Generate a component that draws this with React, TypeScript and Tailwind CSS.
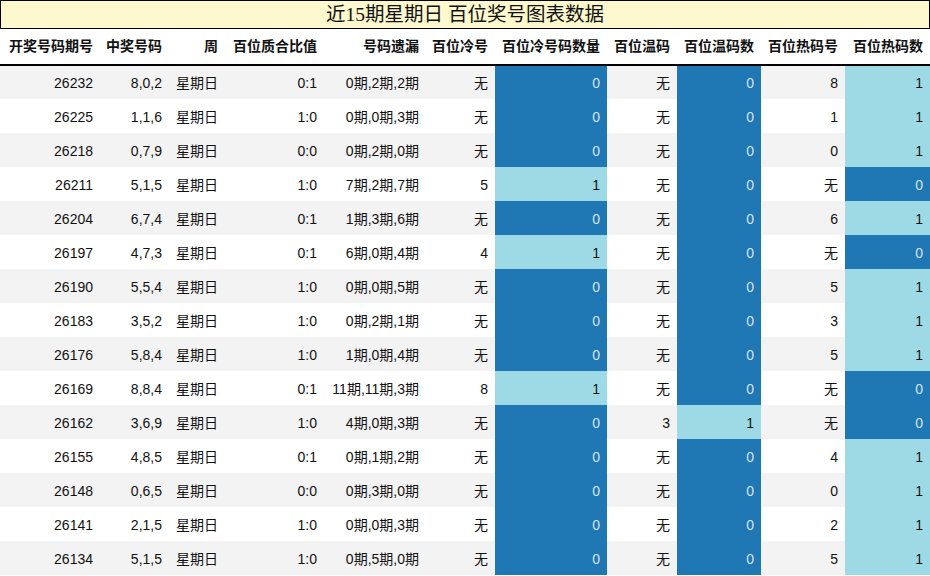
const ROWS: string[][] = [
  ["26232", "8,0,2", "星期日", "0:1", "0期,2期,2期", "无", "0", "无", "0", "8", "1"],
  ["26225", "1,1,6", "星期日", "1:0", "0期,0期,3期", "无", "0", "无", "0", "1", "1"],
  ["26218", "0,7,9", "星期日", "0:0", "0期,2期,0期", "无", "0", "无", "0", "0", "1"],
  ["26211", "5,1,5", "星期日", "1:0", "7期,2期,7期", "5", "1", "无", "0", "无", "0"],
  ["26204", "6,7,4", "星期日", "0:1", "1期,3期,6期", "无", "0", "无", "0", "6", "1"],
  ["26197", "4,7,3", "星期日", "0:1", "6期,0期,4期", "4", "1", "无", "0", "无", "0"],
  ["26190", "5,5,4", "星期日", "1:0", "0期,0期,5期", "无", "0", "无", "0", "5", "1"],
  ["26183", "3,5,2", "星期日", "1:0", "0期,2期,1期", "无", "0", "无", "0", "3", "1"],
  ["26176", "5,8,4", "星期日", "1:0", "1期,0期,4期", "无", "0", "无", "0", "5", "1"],
  ["26169", "8,8,4", "星期日", "0:1", "11期,11期,3期", "8", "1", "无", "0", "无", "0"],
  ["26162", "3,6,9", "星期日", "1:0", "4期,0期,3期", "无", "0", "3", "1", "无", "0"],
  ["26155", "4,8,5", "星期日", "0:1", "0期,1期,2期", "无", "0", "无", "0", "4", "1"],
  ["26148", "0,6,5", "星期日", "0:0", "0期,3期,0期", "无", "0", "无", "0", "0", "1"],
  ["26141", "2,1,5", "星期日", "1:0", "0期,0期,3期", "无", "0", "无", "0", "2", "1"],
  ["26134", "5,1,5", "星期日", "1:0", "0期,5期,0期", "无", "0", "无", "0", "5", "1"],
];

const HEADERS = [
  "开奖号码期号",
  "中奖号码",
  "周",
  "百位质合比值",
  "号码遗漏",
  "百位冷号",
  "百位冷号码数量",
  "百位温码",
  "百位温码数",
  "百位热码号",
  "百位热码数",
];

const WIDTHS = [100, 69, 56, 99, 102, 69, 112, 70, 84, 84, 85];

// columns that are shaded by their count value
const COUNT_COLS = [6, 8, 10];

function cellClass(ci: number, v: string, ri: number) {
  if (COUNT_COLS.includes(ci)) {
    return v === "0" ? "bg-[#1f77b4] text-[#d6e4f0]" : "bg-[#9edae5] text-[#111]";
  }
  return ri % 2 === 0 ? "bg-[#f3f3f3] text-[#111]" : "bg-white text-[#111]";
}

export default function App() {
  return (
    <div className="w-[930px] h-[576px] overflow-hidden bg-white font-['Liberation_Sans','Noto_Sans_CJK_SC',sans-serif]">
      <div className="h-[29px] border border-black bg-[#fdf8cd] flex items-center justify-center text-[19.5px] leading-none text-[#111] font-['Liberation_Serif','Noto_Sans_CJK_SC',serif]">
        近15期星期日 百位奖号图表数据
      </div>
      <table className="border-collapse table-fixed w-[930px] text-[14px]">
        <colgroup>
          {WIDTHS.map((w, i) => (
            <col key={i} style={{ width: w }} />
          ))}
        </colgroup>
        <thead>
          <tr className="h-[36px] border-b-2 border-black">
            {HEADERS.map((h) => (
              <th key={h} className="text-right font-bold pr-[7px] pl-0 whitespace-nowrap text-[#111]">
                {h}
              </th>
            ))}
          </tr>
        </thead>
        <tbody>
          {ROWS.map((r, ri) => (
            <tr key={r[0]} className="h-[34px]">
              {r.map((v, ci) => (
                <td
                  key={ci}
                  className={`text-right pr-[7px] pl-0 pt-[2px] whitespace-nowrap ${cellClass(ci, v, ri)} ${
                    ci === 2 ? "text-left pl-[7px]" : ""
                  }`}
                >
                  {v}
                </td>
              ))}
            </tr>
          ))}
        </tbody>
      </table>
    </div>
  );
}
